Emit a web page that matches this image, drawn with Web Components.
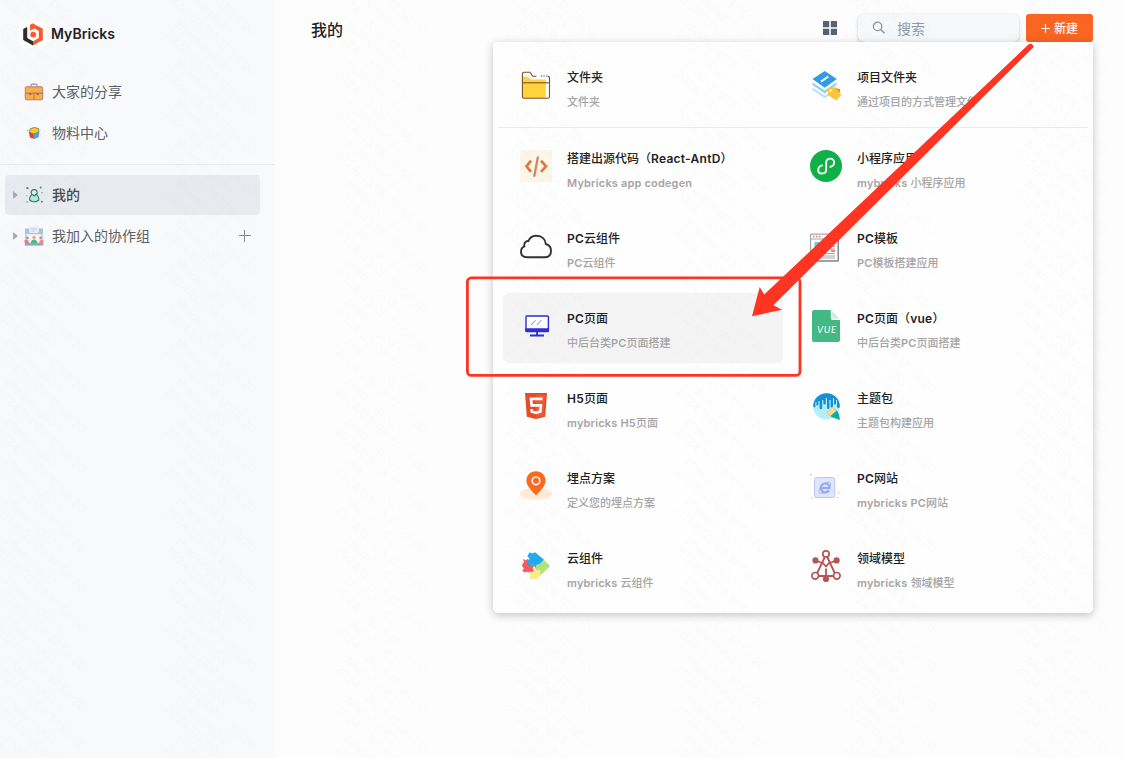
<!DOCTYPE html>
<html lang="zh-CN">
<head>
<meta charset="utf-8">
<title>MyBricks</title>
<style>
html,body{margin:0;height:100%;overflow:hidden;background:#fdfdfd}
body{font-family:Inter,"Noto Sans CJK SC",sans-serif;color:#222}
</style>
</head>
<body>
<mb-app></mb-app>
<script>
const ICONS = {
logo:`<rect x="-3" y="-3" width="28" height="28" rx="8" fill="#fff"/><path d="M4.5 4.2 1.2 5.9V17L11 22.4V18.2L5.2 15V4.1z" fill="#2e2e2e"/><path d="M8 1.9 11 .5 20.8 5.8V16.9L11 22.4V18.2L16.8 15V7.9L11.8 5V7.6z" fill="#fb5a2c"/><path d="M8 1.9 11 .5 12.5 5.2 8 7.6z" fill="#fb5a2c"/><circle cx="11.2" cy="11.6" r="2.9" fill="#fb5a2c"/>`,
bag:`<g transform="translate(0 .8)"><path d="M7 4V2.6Q7 1.3 8.3 1.3H11.7Q13 1.3 13 2.6V4" fill="none" stroke="#8d8fa8" stroke-width="1.1"/><rect x="1.3" y="4" width="17.4" height="13" rx="1" fill="#fdae45" stroke="#a9807c" stroke-width="1"/><path d="M1.5 10.4H18.5M10 10.4V17" stroke="#a96d55" stroke-width=".9"/><circle cx="6.3" cy="11.2" r="1.3" fill="#7478a0"/><circle cx="13.7" cy="11.2" r="1.3" fill="#7478a0"/></g>`,
cube:`<path d="M10 4.5 14.5 5.5 15 9 10 11 5.5 9.5 6 6z" fill="#fdc92a" stroke="#5f674f" stroke-width=".7"/><path d="M4.7 9 9.6 11.2 9.8 15.7 6 14.5z" fill="#e93636"/><path d="M10 11 15 9.3 14.3 14 9.8 15.7z" fill="#34aef0" stroke="#467c9a" stroke-width=".5"/><circle cx="3.6" cy="7.5" r=".8" fill="#64ce97"/><circle cx="16.3" cy="7" r=".6" fill="#8dcee5"/><circle cx="16.8" cy="12" r=".5" fill="#f3bd8b"/>`,
user:`<g fill="none" stroke="#43756d" stroke-width="1.1"><circle cx="10.2" cy="7.6" r="3" fill="#d9f7f1"/><path d="M8.5 9.6C5.8 10.8 5.6 13.5 5.7 15Q7.8 16.8 10.2 16.7 13 16.8 14.8 15C14.9 12.6 14 10.4 11.8 9.6L10.2 11z" fill="#aceddd"/></g><g fill="#5a837c"><circle cx="3.4" cy="3.1" r="1.2"/><circle cx="16.7" cy="2.6" r="1"/><circle cx="18" cy="7.7" r=".6"/><circle cx="3" cy="16.9" r=".7"/><circle cx="17.8" cy="16.8" r="1"/><circle cx="2.9" cy="10.8" r=".5"/></g>`,
team:`<path d="M1 2.5H19V8.5H1z" fill="#a3c8da"/><rect x="5.2" y=".5" width="9.6" height="6.5" rx="1" fill="#e9eff7"/><path d="M7 3H13M7 5H11" stroke="#b6c4d5" stroke-width=".8"/><path d="M1 8.5H19V18H1z" fill="#f4f7fa"/><path d="M.8 8.5H3V17H.8zM17 8.5H19.2V17H17z" fill="#c3d9e6"/><rect x=".8" y="17" width="18.5" height="2.6" fill="#85adc2"/><circle cx="10" cy="11.5" r="1.7" fill="#e8a983"/><circle cx="3.4" cy="12" r="1.4" fill="#d98a80"/><circle cx="16.6" cy="12" r="1.4" fill="#d98a80"/><path d="M6.7 17Q7.3 13.4 10 13.4T13.4 17z" fill="#49b98b"/><path d="M.6 17V14Q4 12.6 5.2 17z" fill="#ee7382"/><path d="M19.4 17V14Q16 12.6 14.8 17z" fill="#ef8c70"/>`,
grid:`<path fill="#586174" d="M1 1h6.2v6.2H1zM8.8 1H15v6.2H8.8zM1 8.8h6.2V15H1zM8.8 8.8H15V15H8.8z"/>`,
search:`<circle cx="5.6" cy="5.4" r="4.2" fill="none" stroke="#85929f" stroke-width="1.3"/><path d="M8.7 8.5 12.6 12.2" stroke="#85929f" stroke-width="1.5"/>`,
folder:`<path d="M2.5 7 9 8.5 11 10.5H25.8V29H3z" fill="#ffd43b"/><g fill="none" stroke="#78512c" stroke-width="1.1"><path d="M16.5 7.2H12.8L10 3.2H4.2Q2.4 3.2 2.4 5V27.5Q2.4 29.3 4.2 29.3H27.7Q29.5 29.3 29.5 27.5V8.8Q29.5 7.4 27.8 7.4"/><path d="M20.8 7H22.2M23.4 7H24.8M26 7H27.4"/><path d="M2.4 13.8H29.5"/></g>`,
project:`<path d="M2.5 21 14.7 29.3 25 22.5V20.5L14.7 26.8 2.5 18.7z" fill="#b3e3fb"/><path d="M2.5 15.8 14.7 24.3 26.6 15.8V13.5L14.7 21.4 2.5 13.4z" fill="#82cff7"/><path d="M2.5 10 14.7 2 26.8 10 14.7 18.7z" fill="#3199e9"/><path d="M11 12.6 18.3 7.5" stroke="#fff" stroke-width="2"/><path d="M18 18.8 26 18.3 31.3 26 26.3 31.5 18 26z" fill="#fdc43c"/><path d="m25.4 19.2 4.7.7v4z" fill="#f28b30"/><circle cx="20.6" cy="21.5" r="1.2" fill="#fff"/>`,
code:`<rect width="32" height="32" fill="#faf7e9"/><path d="M11 10.7 6.5 16.3 11 21.8M21 10.7 26 16.3 21 21.8" fill="none" stroke="#e27640" stroke-width="2.7"/><path d="M18 6.5 14.2 26.7" stroke="#dd8155" stroke-width="2.2"/>`,
mini:`<circle cx="16" cy="16" r="16" fill="#0fb045"/><path d="M20.2 16.9C25.6 15.6 25.4 8.7 20.4 8.7C17.9 8.7 16.2 10.2 16.2 12.6V19.5C16.2 22 14.5 23.5 12 23.5C7 23.5 6.8 16.6 12.2 15.3" fill="none" stroke="#fff" stroke-width="1.8" stroke-linecap="round"/>`,
cloud:`<path d="M7.2 27.2C3.1 27.2 1 25 1 22 1 19.1 2.4 17.1 4.4 16.4 3.6 13.1 6 10.8 8.3 11.1 9.7 7.5 12.8 5.5 16.7 5.7 22 5.8 25.4 9.4 25.8 14 29.2 14.9 31 17.4 31 20.8 31 25 28.7 27.2 25 27.2z" fill="none" stroke="#333" stroke-width="1.9"/>`,
template:`<g fill="#fff" stroke="#a3a6ad"><rect x=".6" y="4.2" width="27.5" height="26.7" rx="1" stroke-width="1.2"/><path d="M.6 9H28M9 13H24M16 16.5H25M16 19H25M5 23.5H25M5 26H25M5 28H25"/></g><path d="M3 6.6H4.5M6 6.6H7.5M9 6.6H10.5" stroke="#e6735d" stroke-width="1.5"/><path d="M4.5 12H12V20H4.5z" fill="#78c5db"/><path d="M21 21H25" stroke="#ed806e" stroke-width="2"/><path d="M28.3 5V31H3" fill="none" stroke="#777b84" stroke-width="1"/>`,
pc:`<rect x="6" y="6" width="22.4" height="15.5" rx=".8" fill="#fff" stroke="#2b2ed2" stroke-width="1.4"/><path d="M5.3 18.2H29V20.4Q29 22 27.4 22H6.8Q5.3 22 5.3 20.4z" fill="#2b2ed2"/><path d="m11 15 4.5-4.8M16.8 15 21.5 10" stroke="#7577ef" stroke-width=".9"/><path d="M17 22V25.2M10 25.5H24" stroke="#2b2ed2" stroke-width="1.8"/>`,
vue:`<path d="M4.2 0H20.8V7.8Q20.8 10 23 10H30V30Q30 32 28 32H4Q2 32 2 30V2.2Q2 0 4.2 0z" fill="#42b883"/><path d="M22 .4 29.5 8.8H23.2Q22 8.8 22 7.6z" fill="#cfeee0"/><text x="7" y="23.2" font-family="Lato,sans-serif" font-style="italic" font-size="9.5" textLength="19" fill="#fff">VUE</text>`,
h5:`<path d="M5 3H27L25.2 26.8 16 29 6.8 26.8z" fill="#e44d28"/><path d="M16 5H25L23.5 25.4 16 27.2z" fill="#ef5b32"/><path d="M22.5 8.9H11L11.6 15.4H20.9L20.3 21.5 16 22.8 11.8 21.5 11.6 19" fill="none" stroke="#fff" stroke-width="2.7"/>`,
theme:`<circle cx="16.5" cy="16.2" r="13.3" fill="#b6edfd"/><path d="M3.2 16.5A13.3 13.3 0 0 1 29.8 16.5V17.2Q28.3 18.6 27 17.2V10H26V14Q25 15.2 24 14V8H23V17Q21.8 18.4 20.6 17V10H19.4V18.2Q18.2 19.6 17 18.2V8H15.8V14Q14.6 15.2 13.4 14V10H12.2V18.6Q10.9 20 9.6 18.6V11H8.4V15Q7.4 16 6.4 15V12H5.4V17Q4.3 18 3.2 16.5z" fill="#168fd5"/><path d="m16.5 22.7 6-5.8 4.7 4.5-5.5 5.8z" fill="#f4dc9e" stroke="#d8b872" stroke-width=".6"/><path d="M26.7 20.4 28.8 23.5 30 30 22.2 27.3 20.5 26z" fill="#0aaea1"/>`,
pin:`<ellipse cx="16" cy="23.7" rx="16" ry="6.1" fill="#feecd9"/><path d="M16 1.3C10.4 1.3 6.4 5.3 6.4 10.8 6.4 16 12.3 21.6 16 25.4 19.7 21.6 25.6 16 25.6 10.8 25.6 5.3 21.6 1.3 16 1.3z" fill="#fc6a20"/><circle cx="16" cy="10.8" r="3.8" fill="none" stroke="#fff" stroke-width="1.6"/>`,
site:`<rect x="4.5" y="7.5" width="20.2" height="20" rx="2" fill="#dfe5fc" stroke="#bcc7f7" stroke-width="1"/><g fill="none" stroke="#97a9f3"><path d="M19 20.6Q17.3 22.8 14.4 22.4T10.7 18Q11.2 13.6 15.2 13.5T19.3 18H11" stroke-width="2.2"/><ellipse cx="14.8" cy="17.8" rx="7.4" ry="3.6" transform="rotate(-43 14.8 17.8)" stroke-width=".7"/></g><g fill="#ffd18b"><circle cx="1" cy="4.8" r="1"/><circle cx="28.5" cy="4.8" r=".6"/><circle cx="28.5" cy="22.7" r="1"/></g><path d="M1 27.5H3M26 27.5H28" stroke="#cad2f9"/>`,
puzzle:`<path d="m21.5 8.4 2 1L30 16l-9.2 9.2L14 17z" fill="#b1e379"/><path d="m14.5 18.5 7 6.5-5.2 4.8-2.3-1.4-2.2 1.7-2.6-2.3 1.6-2.5-2-2.3z" fill="#fcec8b"/><path d="m3.2 9 2.6 1.2L8 8.8l1.6 3.4 4.6 3.8-5.3 6.6-1.9-.8-3 .8-1.6-2.4 1.5-2L2 16l.6-2.2 1.3-1.6z" fill="#f25c65"/><path d="m9.6 2.3 2.6 1.1L15 2.2l8.8 7.4-7.8 7.8-8.3-6.5 1.9-2.2L7.4 6.3z" fill="#20acf1"/><circle cx="18" cy="16.2" r="2" fill="#b1e379"/><circle cx="11.6" cy="20" r="2.1" fill="#f25c65"/><circle cx="9.2" cy="13.2" r="2" fill="#20acf1"/><circle cx="18.5" cy="21.6" r="1.9" fill="#fcec8b"/>`,
model:`<g fill="none" stroke="#b65556" stroke-width="1.8"><path d="M8 26H24M16 18.5V29M5.5 10.5 13.5 13.5M26.5 10.5 18.5 13.5M14.8 7 7 23.5M17.2 7 25 23.5"/></g><g fill="#fff" stroke="#b65556" stroke-width="1.7"><circle cx="16" cy="4" r="3.2"/><path d="M12.6 12.6 16 16.5 19.4 12.6"/><circle cx="5.2" cy="25.8" r="3.3"/><circle cx="26.8" cy="25.8" r="3.3"/></g><g fill="#b65556"><circle cx="5.5" cy="10.4" r="3.1"/><circle cx="26.6" cy="10.4" r="3.1"/><circle cx="16" cy="29" r="3.1"/></g>`
};
const icon = (name, size, box = size) => `<svg width="${size}" height="${size}" viewBox="0 0 ${box} ${box}" overflow="visible" aria-hidden="true">${ICONS[name]}</svg>`;

const define = (tag, render) => customElements.define(tag, class extends HTMLElement {
  connectedCallback() {
    if (this.shadowRoot) return;
    this.attachShadow({ mode: 'open' }).innerHTML = render(this);
  }
});

define('mb-nav-item', el => `<style>
:host{display:flex;align-items:center;height:40px;margin:0 15px 1px 5px;border-radius:4px;font-size:14px;line-height:22px;color:#5b5e66;box-sizing:border-box;padding:0 8px}
:host([selected]){background:#e7eaef;font-weight:500;color:#474a51}
i{width:5px;height:8px;margin-right:6px;box-sizing:border-box}
i.on{background:#a9abb0;clip-path:polygon(0 0,100% 50%,0 100%)}
svg{flex:none;display:block}.t{margin-left:8px;flex:1}
.add{width:12px;height:12px;margin-right:1px;background:linear-gradient(#82868e,#82868e) center/12px 1.2px no-repeat,linear-gradient(#82868e,#82868e) center/1.2px 12px no-repeat}
</style><i class="${el.hasAttribute('expandable') ? 'on' : ''}"></i>${icon(el.getAttribute('icon'), 20)}<span class="t"><slot></slot></span>${el.hasAttribute('addable') ? '<span class="add"></span>' : ''}`);

define('mb-sidebar', () => `<style>
:host{display:block;width:275px;flex:none;background:#f8f9fb;box-sizing:border-box}
.logo{display:flex;align-items:center;height:24px;padding:22px 0 26px 22px;font-size:14px;font-weight:600;color:#222;line-height:22px}
.logo span{margin-left:7px;letter-spacing:.05px}
hr{height:1px;border:0;margin:10px 0;background:#e8e9ec}
mb-nav-item+hr{margin-top:11px}
</style>
<div class="logo">${icon('logo', 22, 22)}<span>MyBricks</span></div>
<mb-nav-item icon="bag">大家的分享</mb-nav-item>
<mb-nav-item icon="cube">物料中心</mb-nav-item>
<hr>
<mb-nav-item icon="user" expandable selected>我的</mb-nav-item>
<mb-nav-item icon="team" expandable addable>我加入的协作组</mb-nav-item>`);

define('mb-header', () => `<style>
:host{display:flex;align-items:flex-start;padding:14px 31px 0 36px;height:28px}
h1{margin:4px auto 0 0;font-size:16px;line-height:24px;font-weight:500;color:#222}
.grid{margin:6px 20px 0 0;height:16px}svg{display:block}
.search{display:flex;align-items:center;box-sizing:border-box;width:161px;height:28px;border-radius:6px;padding:0 0 1px 14px;background:#f6f8fa;box-shadow:0 1px 3px rgba(60,70,90,.32);font-size:14px;color:#8d9aac}
.search span{margin-left:12px}
.new{display:flex;align-items:center;justify-content:center;gap:4px;margin-left:7px;width:67px;height:28px;box-sizing:border-box;padding-bottom:1px;border-radius:3px;background:#fa6522;color:#fff;font-size:12px;font-weight:500}
.new svg{margin-top:1px}
</style>
<h1>我的</h1><span class="grid">${icon('grid', 16)}</span>
<div class="search">${icon('search', 13)}<span>搜索</span></div>
<div class="new"><svg width="9" height="9" viewBox="0 0 9 9"><path d="M4.5 0V9M0 4.5H9" stroke="#fff" stroke-width="1.1"/></svg><span>新建</span></div>`);

define('mb-app-card', el => `<style>
:host{display:flex;box-sizing:border-box;width:280px;height:70px;padding:17px 0 0 17px;border-radius:6px}
:host([active]){background:#f4f4f4}
svg{display:block;flex:none}
div{margin-left:15px;white-space:nowrap}
p{margin:0}
.name{font-size:12px;line-height:18px;font-weight:500;color:#222;--latin-gap:.26px}
.desc{margin-top:7px;font-size:11px;line-height:17px;font-weight:500;color:#a5a5a5;--latin-gap:.17px}
</style>${icon(el.getAttribute('icon'), 32)}<div><p class="name"><slot name="title"></slot></p><p class="desc"><slot name="desc"></slot></p></div>`);

/* Latin runs are set a step heavier than the Chinese around them. */
const mixed = t => t.replace(/[A-Za-z0-9][A-Za-z0-9 -]*/g, '<b>$&</b>');
const card = (ic, name, desc, attr = '') => `<mb-app-card icon="${ic}" ${attr}><span slot="title">${mixed(name)}</span><span slot="desc">${mixed(desc)}</span></mb-app-card>`;

define('mb-create-panel', () => `<style>
:host{display:block;box-sizing:border-box;width:600px;height:571px;margin-left:218px;padding:10px 5px;background:#fefefe;border-radius:4px 0 5px 5px;box-shadow:0 2px 8px rgba(0,0,0,.24);position:relative}
.row{display:grid;grid-template-columns:280px 280px;gap:10px;padding:0 5px}
hr{border:0;height:1px;background:#eaeaea;margin:5px 0}
b{font-weight:600;letter-spacing:var(--latin-gap)}
</style>
<div class="row">
${card('folder', '文件夹', '文件夹')}
${card('project', '项目文件夹', '通过项目的方式管理文件')}
</div><hr>
<div class="row">
${card('code', '搭建出源代码（React-AntD）', 'Mybricks app codegen')}
${card('mini', '小程序应用', 'mybricks 小程序应用')}
${card('cloud', 'PC云组件', 'PC云组件')}
${card('template', 'PC模板', 'PC模板搭建应用')}
${card('pc', 'PC页面', '中后台类PC页面搭建', 'active')}
${card('vue', 'PC页面（vue）', '中后台类PC页面搭建')}
${card('h5', 'H5页面', 'mybricks H5页面')}
${card('theme', '主题包', '主题包构建应用')}
${card('pin', '埋点方案', '定义您的埋点方案')}
${card('site', 'PC网站', 'mybricks PC网站')}
${card('puzzle', '云组件', 'mybricks 云组件')}
${card('model', '领域模型', 'mybricks 领域模型')}
</div>`);

define('mb-watermark', () => {
  let s = '';
  for (let k = -3; k <= 1; k++) {
    const y = k * 39.7;
    s += `<text transform="translate(4 ${y + 8}) rotate(43)">2024/03/08 17:58:20</text><text transform="translate(14 ${y - 2}) rotate(43)">zhaoxing03 -</text>`;
  }
  return `<style>:host{position:absolute;inset:0;pointer-events:none}svg{display:block}text{font:12px Inter,sans-serif;fill:#000;fill-opacity:.012}</style>
<svg width="1124" height="758" aria-hidden="true"><defs><pattern id="w" x="-10" y="27" width="170" height="39.7" patternUnits="userSpaceOnUse">${s}</pattern></defs><rect width="1124" height="758" fill="url(#w)"/></svg>`;
});

define('mb-annotation', () => `<style>:host{position:absolute;inset:0;pointer-events:none}svg{display:block}</style>
<svg width="1124" height="758" aria-hidden="true"><rect x="467.4" y="277.9" width="332.6" height="97.5" rx="4" fill="none" stroke="#ff3422" stroke-width="2.8"/>
<path d="M752 316.2 759.7 287 764.2 294.6 1028.2 44.8Q1031 42.7 1032.8 45T1032.2 48.5L773.4 305.2 782 309.8z" fill="#ff3422"/></svg>`);

define('mb-app', () => `<style>
:host{display:flex;position:relative;width:1124px;height:758px;overflow:hidden;background:#fdfdfd}
main{flex:1;min-width:0}
</style>
<mb-sidebar></mb-sidebar>
<main><mb-header></mb-header><mb-create-panel></mb-create-panel></main>
<mb-watermark></mb-watermark><mb-annotation></mb-annotation>`);
</script>
</body>
</html>
